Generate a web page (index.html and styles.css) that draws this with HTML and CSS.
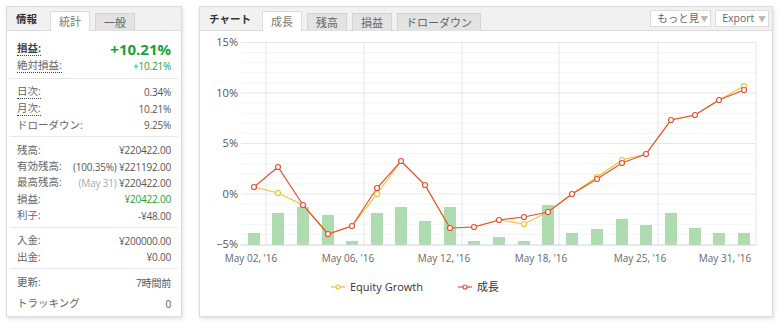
FILE: index.html
```html
<!DOCTYPE html>
<html lang="ja">
<head>
    <meta charset="UTF-8">
    <title>統計</title>
    <link rel="stylesheet" href="styles.css">
</head>
<body>
<div class="page">
    <div class="panel stats">
        <div class="head">
            <span class="title">情報</span>
            <span class="tab active">統計</span>
            <span class="tab">一般</span>
        </div>
        <div class="sec first">
            <div class="row big"><span class="lbl dot">損益:</span><span class="val green">+10.21%</span></div>
            <div class="row"><span class="lbl dot">絶対損益:</span><span class="val green">+10.21%</span></div>
        </div>
        <div class="sec">
            <div class="row"><span class="lbl dot">日次:</span><span class="val">0.34%</span></div>
            <div class="row"><span class="lbl dot">月次:</span><span class="val">10.21%</span></div>
            <div class="row"><span class="lbl">ドローダウン:</span><span class="val">9.25%</span></div>
        </div>
        <div class="sec">
            <div class="row"><span class="lbl">残高:</span><span class="val">¥220422.00</span></div>
            <div class="row"><span class="lbl">有効残高:</span><span class="val">(100.35%) ¥221192.00</span></div>
            <div class="row"><span class="lbl">最高残高:</span><span class="val"><span class="muted">(May 31)</span> ¥220422.00</span></div>
            <div class="row"><span class="lbl">損益:</span><span class="val green">¥20422.00</span></div>
            <div class="row"><span class="lbl">利子:</span><span class="val">-¥48.00</span></div>
        </div>
        <div class="sec">
            <div class="row"><span class="lbl">入金:</span><span class="val">¥200000.00</span></div>
            <div class="row"><span class="lbl">出金:</span><span class="val">¥0.00</span></div>
        </div>
        <div class="sec last">
            <div class="row"><span class="lbl">更新:</span><span class="val">7時間前</span></div>
            <div class="row tall"><span class="lbl">トラッキング</span><span class="val">0</span></div>
        </div>
    </div>

    <div class="panel chart">
        <div class="head">
            <span class="title">チャート</span>
            <span class="tab active">成長</span>
            <span class="tab">残高</span>
            <span class="tab">損益</span>
            <span class="tab">ドローダウン</span>
            <span class="tools">
                <span class="btn">もっと見<span class="arrow">▼</span></span>
                <span class="btn">Export <span class="arrow">▼</span></span>
            </span>
        </div>
        <div class="body">
            <svg class="plot" width="572" height="286" viewBox="200 31 572 286">
                <g class="minor">
                    <line x1="241" x2="756" y1="52.6" y2="52.6"/><line x1="241" x2="756" y1="62.7" y2="62.7"/>
                    <line x1="241" x2="756" y1="72.8" y2="72.8"/><line x1="241" x2="756" y1="82.9" y2="82.9"/>
                    <line x1="241" x2="756" y1="103.1" y2="103.1"/><line x1="241" x2="756" y1="113.2" y2="113.2"/>
                    <line x1="241" x2="756" y1="123.3" y2="123.3"/><line x1="241" x2="756" y1="133.4" y2="133.4"/>
                    <line x1="241" x2="756" y1="153.6" y2="153.6"/><line x1="241" x2="756" y1="163.7" y2="163.7"/>
                    <line x1="241" x2="756" y1="173.8" y2="173.8"/><line x1="241" x2="756" y1="183.9" y2="183.9"/>
                    <line x1="241" x2="756" y1="204.1" y2="204.1"/><line x1="241" x2="756" y1="214.2" y2="214.2"/>
                    <line x1="241" x2="756" y1="224.3" y2="224.3"/><line x1="241" x2="756" y1="234.4" y2="234.4"/>
                </g>
                <g class="major">
                    <line x1="241" x2="756" y1="42.5" y2="42.5"/>
                    <line x1="241" x2="756" y1="93" y2="93"/>
                    <line x1="241" x2="756" y1="143.5" y2="143.5"/>
                    <line x1="241" x2="756" y1="194" y2="194"/>
                    <line x1="266" x2="266" y1="42" y2="245"/>
                    <line x1="364" x2="364" y1="42" y2="245"/>
                    <line x1="462" x2="462" y1="42" y2="245"/>
                    <line x1="559" x2="559" y1="42" y2="245"/>
                    <line x1="658" x2="658" y1="42" y2="245"/>
                    <line x1="756" x2="756" y1="42" y2="245"/>
                </g>
                <g class="ylab">
                    <text x="238" y="46">15%</text>
                    <text x="238" y="97">10%</text>
                    <text x="238" y="147">5%</text>
                    <text x="238" y="198">0%</text>
                    <text x="238" y="248">−5%</text>
                </g>
                <g class="bars">
                    <rect x="248" y="233" width="12" height="12"/>
                    <rect x="272" y="213" width="12" height="32"/>
                    <rect x="297" y="207" width="12" height="38"/>
                    <rect x="322" y="215" width="12" height="30"/>
                    <rect x="346" y="241" width="12" height="4"/>
                    <rect x="371" y="213" width="12" height="32"/>
                    <rect x="395" y="207" width="12" height="38"/>
                    <rect x="419" y="221" width="12" height="24"/>
                    <rect x="444" y="207" width="12" height="38"/>
                    <rect x="468" y="241" width="12" height="4"/>
                    <rect x="493" y="237" width="12" height="8"/>
                    <rect x="518" y="241" width="12" height="4"/>
                    <rect x="542" y="205" width="12" height="40"/>
                    <rect x="566" y="233" width="12" height="12"/>
                    <rect x="591" y="229" width="12" height="16"/>
                    <rect x="616" y="219" width="12" height="26"/>
                    <rect x="640" y="225" width="12" height="20"/>
                    <rect x="665" y="213" width="12" height="32"/>
                    <rect x="689" y="228" width="12" height="17"/>
                    <rect x="713" y="233" width="12" height="12"/>
                    <rect x="738" y="233" width="12" height="12"/>
                </g>
                <line class="axis" x1="241" x2="756" y1="245" y2="245"/>
                <g class="xlab">
                    <text x="251" y="262">May 02, '16</text>
                    <text x="348" y="262">May 06, '16</text>
                    <text x="444" y="262">May 12, '16</text>
                    <text x="541" y="262">May 18, '16</text>
                    <text x="640" y="262">May 25, '16</text>
                    <text x="725" y="262">May 31, '16</text>
                </g>
                <polyline class="eq" points="254,187 278,193 303,205 328,234 352,226 377,194 401,161 425,185 450,228 474,227 499,220 524,224 548,212 572,194 597,177 622,160 646,154 671,120 695,115 719,100 744,86"/>
                <polyline class="gr" points="254,187 278,167 303,205 328,234 352,226 377,188 401,161 425,185 450,228 474,227 499,220 524,217 548,212 572,194 597,179 622,163 646,154 671,120 695,115 719,100 744,90"/>
                <g class="eqm">
                    <circle cx="278" cy="193" r="2.5"/><circle cx="377" cy="194" r="2.5"/>
                    <circle cx="524" cy="224" r="2.5"/><circle cx="597" cy="177" r="2.5"/>
                    <circle cx="622" cy="160" r="2.5"/><circle cx="744" cy="86" r="2.5"/>
                </g>
                <g class="grm">
                    <circle cx="254" cy="187" r="2.5"/><circle cx="278" cy="167" r="2.5"/>
                    <circle cx="303" cy="205" r="2.5"/><circle cx="328" cy="234" r="2.5"/>
                    <circle cx="352" cy="226" r="2.5"/><circle cx="377" cy="188" r="2.5"/>
                    <circle cx="401" cy="161" r="2.5"/><circle cx="425" cy="185" r="2.5"/>
                    <circle cx="450" cy="228" r="2.5"/><circle cx="474" cy="227" r="2.5"/>
                    <circle cx="499" cy="220" r="2.5"/><circle cx="524" cy="217" r="2.5"/>
                    <circle cx="548" cy="212" r="2.5"/><circle cx="572" cy="194" r="2.5"/>
                    <circle cx="597" cy="179" r="2.5"/><circle cx="622" cy="163" r="2.5"/>
                    <circle cx="646" cy="154" r="2.5"/><circle cx="671" cy="120" r="2.5"/>
                    <circle cx="695" cy="115" r="2.5"/><circle cx="719" cy="100" r="2.5"/>
                    <circle cx="744" cy="90" r="2.5"/>
                </g>
                <g class="legend">
                    <line class="eq" x1="331" x2="345" y1="287" y2="287"/>
                    <circle class="eqm" cx="338" cy="287" r="2"/>
                    <text x="350" y="291">Equity Growth</text>
                    <line class="gr" x1="458" x2="472" y1="287" y2="287"/>
                    <circle class="grm" cx="465" cy="287" r="2"/>
                    <text x="477" y="291">成長</text>
                </g>
            </svg>
        </div>
    </div>
</div>
</body>
</html>
```

FILE: styles.css
```css
* {
    box-sizing: border-box;
}

body {
    margin: 0;
    background: #fff;
    font-family: "Open Sans", "Noto Sans CJK JP", sans-serif;
    font-size: 11px;
    color: #555;
}

.page {
    display: flex;
    gap: 17px;
    padding: 6px;
}

.panel {
    background: #fff;
    border: 1px solid #dcdcdc;
    box-shadow: 1px 2px 4px rgba(0, 0, 0, 0.12);
    height: 311px;
}

.stats {
    width: 176px;
}

.chart {
    width: 574px;
}

.head {
    display: flex;
    align-items: flex-end;
    height: 24px;
    background: #f1f1f1;
    border-bottom: 1px solid #dcdcdc;
    padding-left: 9px;
}

.title {
    font-weight: bold;
    font-size: 10.5px;
    color: #333;
    align-self: center;
    margin-right: 13px;
}

.chart .title {
    margin-right: 11px;
}

.tab {
    height: 18px;
    line-height: 17px;
    padding: 0 8px;
    margin-right: 5px;
    margin-bottom: -1px;
    background: #e3e3e3;
    border: 1px solid #d4d4d4;
    border-bottom: 0;
    color: #666;
    font-size: 11px;
}

.tab.active {
    height: 20px;
    line-height: 19px;
    background: #fff;
    border-color: #dcdcdc;
    color: #777;
}

.tools {
    margin-left: auto;
    display: flex;
    gap: 4px;
    align-self: center;
    margin-right: 3px;
}

.btn {
    height: 17px;
    line-height: 15px;
    padding: 0 2px 0 6px;
    background: #fff;
    border: 1px solid #dcdcdc;
    color: #666;
    font-size: 10.5px;
}

.arrow {
    color: #bbb;
    font-size: 8px;
    margin-left: 1px;
}

.sec {
    margin: 0 3px;
    padding: 5px 7px 3px;
    border-bottom: 1px solid #e8e8e8;
}

.sec.first {
    padding-top: 9px;
    padding-bottom: 4px;
}

.sec.last {
    border-bottom: 0;
}

.row {
    display: flex;
    justify-content: space-between;
    align-items: center;
    height: 16.3px;
    white-space: nowrap;
}

.row.big {
    height: 18px;
}

.row.tall {
    height: 22px;
    margin-top: 2px;
}

.lbl {
    color: #666;
    font-size: 10.5px;
    line-height: 13px;
}

.dot {
    border-bottom: 1px dotted #444;
}

.big .lbl {
    font-weight: bold;
    color: #444;
}

.val {
    color: #555;
    font-size: 10px;
    letter-spacing: -0.2px;
}

.big .val {
    font-size: 15px;
    font-weight: bold;
    letter-spacing: 0;
}

.green {
    color: #15a33a;
}

.muted {
    color: #aaa;
}

.plot {
    display: block;
}

.minor line {
    stroke: #f4f4f4;
    stroke-width: 1;
}

.major line {
    stroke: #e6e6e6;
    stroke-width: 1;
}

.axis {
    stroke: #c8d3e0;
    stroke-width: 1;
}

.ylab text {
    text-anchor: end;
    fill: #555;
    font-size: 11px;
}

.xlab text {
    text-anchor: middle;
    fill: #666;
    font-size: 10px;
}

.bars rect {
    fill: #aedcb0;
}

polyline {
    fill: none;
    stroke-width: 1.2;
}

.eq {
    stroke: #f2c230;
    stroke-width: 1.2;
}

.gr {
    stroke: #e05438;
    stroke-width: 1.2;
}

.eqm circle,
circle.eqm {
    fill: #fff;
    stroke: #f2c230;
    stroke-width: 1.2;
}

.grm circle,
circle.grm {
    fill: #fff;
    stroke: #e05438;
    stroke-width: 1.2;
}

.legend text {
    fill: #333;
    font-size: 11px;
}
```
